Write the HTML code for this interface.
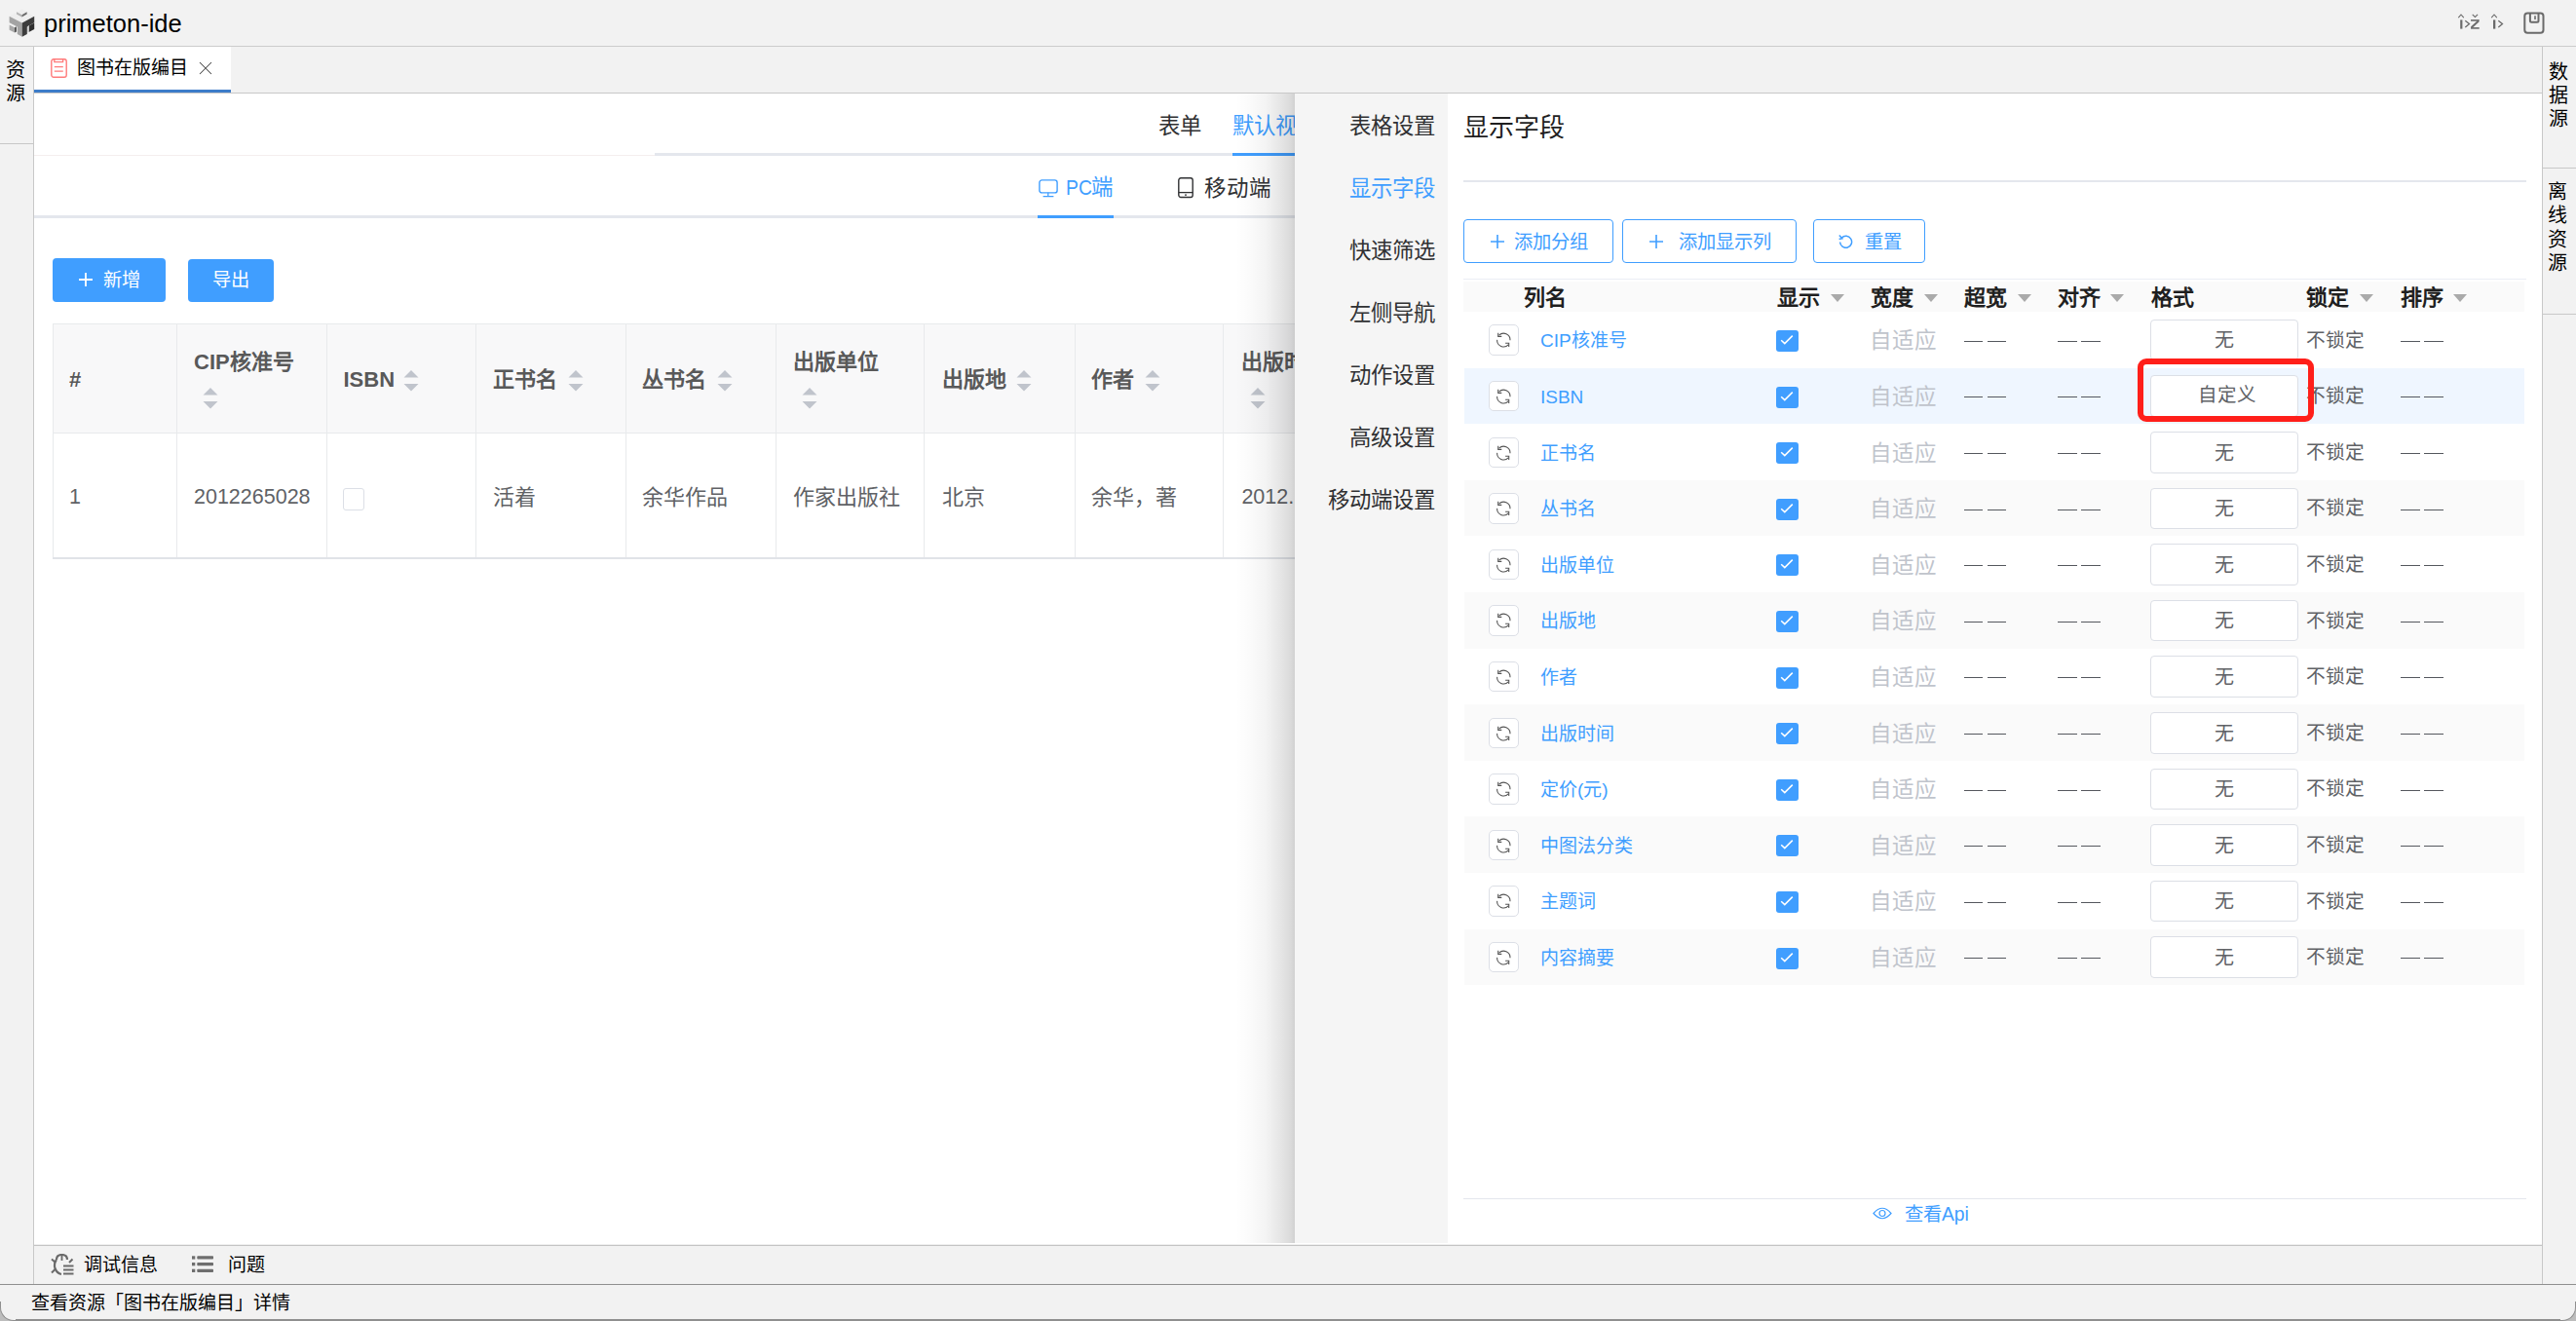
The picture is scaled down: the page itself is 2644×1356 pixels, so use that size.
<!DOCTYPE html>
<html lang="zh-CN"><head><meta charset="utf-8">
<style>
*{box-sizing:border-box;margin:0;padding:0}
html,body{width:2644px;height:1356px;overflow:hidden}
body{background:#f2f2f2;font-family:"Liberation Sans",sans-serif;position:relative;color:#000}
.a{position:absolute}
.t{position:absolute;white-space:nowrap;line-height:1}
.b{font-weight:bold}
</style></head><body>

<svg class="a" style="left:0;top:0" width="44" height="44" viewBox="0 0 44 44">
  <polygon points="9.6,16.8 22.7,9.3 35.2,16.8 22.7,23.6" fill="#eeeeee"/>
  <polygon points="17,12.2 22.5,15.3 22.5,17.6 17,14.5" fill="#b4b4b4"/>
  <polygon points="22.5,15.3 27.6,12.2 27.6,14.5 22.5,17.6" fill="#6a6a6a"/>
  <polygon points="9.6,16.8 22.7,23.6 22.7,37.8 17.8,35 17.8,27.5 9.6,23.2" fill="#a3a3a3"/>
  <polygon points="9.6,25.4 15,28.2 15,33.6 9.6,30.8" fill="#a8a8a8"/>
  <polygon points="15,28.2 17,27.2 17,32.4 15,33.6" fill="#5a5a5a"/>
  <polygon points="22.7,23.6 35.2,16.8 35.2,23.2 27.8,27.4 27.8,35 22.7,37.8" fill="#3c3c3c"/>
  <polygon points="30,26.2 35.2,23.4 35.2,30 30,32.8" fill="#2e2e2e"/>
  <polygon points="28.4,27.1 30,26.2 30,32.8 28.4,33.6" fill="#bdbdbd"/>
</svg>
<div class="t" style="left:45px;top:11.5px;font-size:25.5px;color:#000;">primeton-ide</div>
<svg class="a" style="left:2520px;top:12px" width="52" height="20" viewBox="0 0 52 20"><g fill="none" stroke="#6a6a6a">
 <path d="M3.3,6.2 L6,3 L8.8,6.2" stroke-width="1.1"/><rect x="5.2" y="8.4" width="2.2" height="9.2" fill="#6a6a6a" stroke="none"/>
 <path d="M10.3,9.2 L14.5,12.6 L10.3,16" stroke-width="1.3"/>
 <path d="M17.7,2.9 L20.4,5.5 L23.1,2.9" stroke-width="1.1"/>
 <rect x="16" y="8.1" width="8.7" height="1.6" fill="#6a6a6a" stroke="none"/><rect x="16" y="16.1" width="8.7" height="1.6" fill="#6a6a6a" stroke="none"/>
 <path d="M24,9.6 L16.6,16.3" stroke-width="2"/>
 <path d="M37.2,6.2 L40,3 L42.8,6.2" stroke-width="1.1"/><rect x="39" y="8.4" width="2.3" height="9.2" fill="#6a6a6a" stroke="none"/>
 <path d="M44.3,9.2 L48.5,12.6 L44.3,16" stroke-width="1.3"/>
</g></svg>
<svg class="a" style="left:2588px;top:11px" width="26" height="26" viewBox="0 0 26 26"><g fill="none" stroke="#6a6a6a">
 <rect x="3.3" y="2.6" width="19.2" height="20.2" rx="3" stroke-width="2"/>
 <path d="M8.9,2.6 V10.3 Q8.9,11.8 10.4,11.8 H16 Q17.5,11.8 17.5,10.3 V2.6" stroke-width="2"/>
 <path d="M14,5.2 V9" stroke-width="1.6"/>
</g></svg>
<div class="a" style="left:0px;top:47px;width:2644px;height:1px;background:#cccccc"></div>
<div class="a" style="left:34px;top:48px;width:1px;height:1270px;background:#c8c8c8"></div>
<div class="a" style="left:0px;top:147px;width:34px;height:1px;background:#c8c8c8"></div>
<div class="t" style="left:6px;top:60px;font-size:20px;color:#000;line-height:24.3px;width:20px;white-space:normal">资源</div>
<div class="a" style="left:2609px;top:48px;width:1px;height:1270px;background:#c8c8c8"></div>
<div class="a" style="left:2610px;top:172px;width:34px;height:1px;background:#c8c8c8"></div>
<div class="a" style="left:2610px;top:322px;width:34px;height:1px;background:#c8c8c8"></div>
<div class="t" style="left:2615.5px;top:61.5px;font-size:20px;color:#000;line-height:24.3px;width:20px;white-space:normal">数据源</div>
<div class="t" style="left:2614.8px;top:184.7px;font-size:20px;color:#000;line-height:24.4px;width:20px;white-space:normal">离线资源</div>
<div class="a" style="left:35px;top:48px;width:202px;height:47px;background:#fff"></div>
<div class="a" style="left:35px;top:92px;width:202px;height:3px;background:#3d7cc9"></div>
<div class="a" style="left:35px;top:95px;width:2574px;height:1px;background:#c8c8c8"></div>
<svg class="a" style="left:52px;top:60px" width="17" height="20" viewBox="0 0 17 20">
  <rect x="0.8" y="0.8" width="15.4" height="18.4" rx="2.2" fill="none" stroke="#ff7b7b" stroke-width="1.4"/>
  <path d="M3.8,0.8 V3.7 H12.6 V0.8" fill="none" stroke="#ff7b7b" stroke-width="1.3"/>
  <path d="M3.8,8.6 H12.8 M3.8,13.2 H12.8" stroke="#ff7b7b" stroke-width="1.3"/>
</svg>
<svg class="a" style="left:204px;top:63px" width="14" height="14" viewBox="0 0 14 14">
  <path d="M1,1 L13,13 M13,1 L1,13" stroke="#444" stroke-width="1.05"/>
</svg>
<div class="t" style="left:79px;top:60px;font-size:19px;color:#000;">图书在版编目</div>
<div class="a" style="left:35px;top:96px;width:2574px;height:1180.5px;background:#fff"></div>
<div class="t" style="left:1188.8px;top:118.8px;font-size:22.4px;color:#303133;">表单</div>
<div class="t" style="left:1265px;top:118.8px;font-size:22.4px;color:#409eff;">默认视图</div>
<div class="a" style="left:35px;top:159px;width:637px;height:1px;background:#f4eeee"></div>
<div class="a" style="left:672px;top:157px;width:700px;height:3px;background:#e4e7ed"></div>
<div class="a" style="left:1265px;top:157px;width:120px;height:3px;background:#409eff"></div>
<svg class="a" style="left:1065.5px;top:184px" width="20" height="19" viewBox="0 0 20 19">
 <rect x="0.9" y="0.9" width="18.2" height="13" rx="2.5" fill="none" stroke="#409eff" stroke-width="1.4"/>
 <path d="M9.8,13.8 V17.4 M4.6,17.6 H15.4" stroke="#409eff" stroke-width="1.3"/>
</svg>
<div class="t" style="left:1094px;top:182.3px;font-size:22.5px;color:#409eff;"><span style="display:inline-block;transform:scaleX(0.86);transform-origin:0 0;width:26.3px">PC</span>端</div>
<svg class="a" style="left:1209.3px;top:181.6px" width="17" height="22" viewBox="0 0 17 22">
 <rect x="0.8" y="0.8" width="14.4" height="19.7" rx="2.2" fill="none" stroke="#303133" stroke-width="1.4"/>
 <path d="M0.8,15.6 H15.2" stroke="#303133" stroke-width="1.3"/>
 <circle cx="8" cy="18.1" r="0.95" fill="#303133"/>
</svg>
<div class="t" style="left:1235.5px;top:183px;font-size:22.5px;color:#303133;">移动端</div>
<div class="a" style="left:35px;top:221px;width:1300px;height:3px;background:#e4e7ed"></div>
<div class="a" style="left:1065px;top:221px;width:78px;height:3px;background:#409eff"></div>
<div class="a" style="left:54px;top:265px;width:116px;height:44.5px;background:#409eff;border-radius:4px"></div>
<svg class="a" style="left:80px;top:279px" width="16" height="16" viewBox="0 0 16 16"><path d="M8,1 V15 M1,8 H15" stroke="#fff" stroke-width="1.8"/></svg>
<div class="t" style="left:106px;top:277.5px;font-size:19.3px;color:#fff;">新增</div>
<div class="a" style="left:193px;top:266px;width:88px;height:43.5px;background:#409eff;border-radius:4px"></div>
<div class="t" style="left:218px;top:277.5px;font-size:19.3px;color:#fff;">导出</div>
<div class="a" style="left:54px;top:332px;width:1300px;height:112px;background:#f8f8f9"></div>
<div class="a" style="left:54px;top:332px;width:1300px;height:1px;background:#e8eaec"></div>
<div class="a" style="left:54px;top:444px;width:1300px;height:1px;background:#e8eaec"></div>
<div class="a" style="left:54px;top:572px;width:1300px;height:1.5px;background:#e0e3e8"></div>
<div class="a" style="left:54px;top:332px;width:1px;height:240px;background:#e8eaec"></div>
<div class="a" style="left:181px;top:332px;width:1px;height:240px;background:#e8eaec"></div>
<div class="a" style="left:335px;top:332px;width:1px;height:240px;background:#e8eaec"></div>
<div class="a" style="left:488px;top:332px;width:1px;height:240px;background:#e8eaec"></div>
<div class="a" style="left:642px;top:332px;width:1px;height:240px;background:#e8eaec"></div>
<div class="a" style="left:796px;top:332px;width:1px;height:240px;background:#e8eaec"></div>
<div class="a" style="left:948px;top:332px;width:1px;height:240px;background:#e8eaec"></div>
<div class="a" style="left:1103px;top:332px;width:1px;height:240px;background:#e8eaec"></div>
<div class="a" style="left:1255px;top:332px;width:1px;height:240px;background:#e8eaec"></div>
<div class="a" style="left:1409px;top:332px;width:1px;height:240px;background:#e8eaec"></div>
<div class="t" style="left:71px;top:379px;font-size:22px;color:#595959;font-weight:bold">#</div>
<div class="t" style="left:199px;top:361px;font-size:22px;color:#595959;font-weight:bold">CIP核准号</div>
<div class="t" style="left:352.5px;top:379px;font-size:22px;color:#595959;font-weight:bold">ISBN</div>
<div class="t" style="left:506px;top:379px;font-size:22px;color:#595959;font-weight:bold">正书名</div>
<div class="t" style="left:659px;top:379px;font-size:22px;color:#595959;font-weight:bold">丛书名</div>
<div class="t" style="left:813.8px;top:361px;font-size:22px;color:#595959;font-weight:bold">出版单位</div>
<div class="t" style="left:967.4px;top:379px;font-size:22px;color:#595959;font-weight:bold">出版地</div>
<div class="t" style="left:1120px;top:379px;font-size:22px;color:#595959;font-weight:bold">作者</div>
<div class="t" style="left:1274.4px;top:361px;font-size:22px;color:#595959;font-weight:bold">出版时间</div>
<svg class="a" style="left:208px;top:398px" width="16" height="22" viewBox="0 0 16 22"><path d="M8,0 L15.5,7.6 H0.5 Z M0.5,14 H15.5 L8,21.6 Z" fill="#c0c4cc"/></svg>
<svg class="a" style="left:414px;top:380px" width="16" height="22" viewBox="0 0 16 22"><path d="M8,0 L15.5,7.6 H0.5 Z M0.5,14 H15.5 L8,21.6 Z" fill="#c0c4cc"/></svg>
<svg class="a" style="left:583px;top:380px" width="16" height="22" viewBox="0 0 16 22"><path d="M8,0 L15.5,7.6 H0.5 Z M0.5,14 H15.5 L8,21.6 Z" fill="#c0c4cc"/></svg>
<svg class="a" style="left:736.4px;top:380px" width="16" height="22" viewBox="0 0 16 22"><path d="M8,0 L15.5,7.6 H0.5 Z M0.5,14 H15.5 L8,21.6 Z" fill="#c0c4cc"/></svg>
<svg class="a" style="left:823.3px;top:398px" width="16" height="22" viewBox="0 0 16 22"><path d="M8,0 L15.5,7.6 H0.5 Z M0.5,14 H15.5 L8,21.6 Z" fill="#c0c4cc"/></svg>
<svg class="a" style="left:1043px;top:380px" width="16" height="22" viewBox="0 0 16 22"><path d="M8,0 L15.5,7.6 H0.5 Z M0.5,14 H15.5 L8,21.6 Z" fill="#c0c4cc"/></svg>
<svg class="a" style="left:1174.6px;top:380px" width="16" height="22" viewBox="0 0 16 22"><path d="M8,0 L15.5,7.6 H0.5 Z M0.5,14 H15.5 L8,21.6 Z" fill="#c0c4cc"/></svg>
<svg class="a" style="left:1283px;top:398px" width="16" height="22" viewBox="0 0 16 22"><path d="M8,0 L15.5,7.6 H0.5 Z M0.5,14 H15.5 L8,21.6 Z" fill="#c0c4cc"/></svg>
<div class="t" style="left:71px;top:500px;font-size:21.5px;color:#606266;">1</div>
<div class="t" style="left:199px;top:500px;font-size:21.5px;color:#606266;">2012265028</div>
<div class="a" style="left:351.5px;top:501px;width:22px;height:23px;border:1px solid #dcdfe6;border-radius:3px;background:#fff"></div>
<div class="t" style="left:506px;top:500px;font-size:22px;color:#606266;">活着</div>
<div class="t" style="left:659px;top:500px;font-size:22px;color:#606266;">余华作品</div>
<div class="t" style="left:813.8px;top:500px;font-size:22px;color:#606266;">作家出版社</div>
<div class="t" style="left:967.4px;top:500px;font-size:22px;color:#606266;">北京</div>
<div class="t" style="left:1120px;top:500px;font-size:22px;color:#606266;">余华，著</div>
<div class="t" style="left:1274.4px;top:500px;font-size:21.5px;color:#606266;">2012.12</div>
<div class="a" style="left:1268px;top:96px;width:61px;height:1180px;background:linear-gradient(to right,rgba(0,0,0,0),rgba(0,0,0,0.02) 28%,rgba(0,0,0,0.047) 52%,rgba(0,0,0,0.10) 77%,rgba(0,0,0,0.145) 93%,rgba(0,0,0,0.18))"></div>
<div class="a" style="left:1329px;top:96px;width:157px;height:1180px;background:#f5f5f5"></div>
<div class="a" style="left:1486px;top:96px;width:1123px;height:1180px;background:#fff"></div>
<div class="t" style="right:1171px;top:118.8px;font-size:22.4px;color:#303133">表格设置</div>
<div class="t" style="right:1171px;top:182.8px;font-size:22.4px;color:#409eff">显示字段</div>
<div class="t" style="right:1171px;top:246.8px;font-size:22.4px;color:#303133">快速筛选</div>
<div class="t" style="right:1171px;top:310.8px;font-size:22.4px;color:#303133">左侧导航</div>
<div class="t" style="right:1171px;top:374.8px;font-size:22.4px;color:#303133">动作设置</div>
<div class="t" style="right:1171px;top:438.8px;font-size:22.4px;color:#303133">高级设置</div>
<div class="t" style="right:1171px;top:502.8px;font-size:22.4px;color:#303133">移动端设置</div>
<div class="t" style="left:1502px;top:118px;font-size:26px;color:#1f1f1f;">显示字段</div>
<div class="a" style="left:1502px;top:185px;width:1091px;height:2px;background:#e4e7ed"></div>
<div class="a" style="left:1502px;top:225px;width:154px;height:44.5px;border:1px solid #409eff;border-radius:4px;background:#fff"></div>
<div class="a" style="left:1665px;top:225px;width:178.5px;height:44.5px;border:1px solid #409eff;border-radius:4px;background:#fff"></div>
<div class="a" style="left:1861px;top:225px;width:114.5px;height:44.5px;border:1px solid #409eff;border-radius:4px;background:#fff"></div>
<svg class="a" style="left:1528.5px;top:240px" width="16" height="16" viewBox="0 0 16 16"><path d="M8,1 V15 M1,8 H15" stroke="#409eff" stroke-width="1.6"/></svg>
<div class="t" style="left:1554px;top:238.5px;font-size:19.3px;color:#409eff;">添加分组</div>
<svg class="a" style="left:1692px;top:240px" width="16" height="16" viewBox="0 0 16 16"><path d="M8,1 V15 M1,8 H15" stroke="#409eff" stroke-width="1.6"/></svg>
<div class="t" style="left:1723px;top:238.5px;font-size:19.3px;color:#409eff;">添加显示列</div>
<svg class="a" style="left:1887px;top:240px" width="15" height="15" viewBox="0 0 15 15"><path d="M3.2,4.2 A6,6 0 1 1 1.6,8.5" fill="none" stroke="#409eff" stroke-width="1.5"/><path d="M0.8,1.6 L3.8,4.8 L0.6,5.6" fill="none" stroke="#409eff" stroke-width="1.5"/></svg>
<div class="t" style="left:1913.5px;top:238.5px;font-size:19.3px;color:#409eff;">重置</div>
<div class="a" style="left:1502px;top:286px;width:1091px;height:1px;background:#ebeef5"></div>
<div class="a" style="left:1502px;top:288.5px;width:1089px;height:31.5px;background:#fafafa"></div>
<div class="t" style="left:1564px;top:295px;font-size:22px;color:#1f1f1f;font-weight:bold">列名</div>
<div class="t" style="left:1824px;top:295px;font-size:22px;color:#1f1f1f;font-weight:bold">显示</div>
<svg class="a" style="left:1879px;top:302px" width="14" height="9" viewBox="0 0 14 9"><path d="M0,0 H14 L7,8 Z" fill="#aaaaaa"/></svg>
<div class="t" style="left:1920px;top:295px;font-size:22px;color:#1f1f1f;font-weight:bold">宽度</div>
<svg class="a" style="left:1975px;top:302px" width="14" height="9" viewBox="0 0 14 9"><path d="M0,0 H14 L7,8 Z" fill="#aaaaaa"/></svg>
<div class="t" style="left:2015.5px;top:295px;font-size:22px;color:#1f1f1f;font-weight:bold">超宽</div>
<svg class="a" style="left:2071px;top:302px" width="14" height="9" viewBox="0 0 14 9"><path d="M0,0 H14 L7,8 Z" fill="#aaaaaa"/></svg>
<div class="t" style="left:2112px;top:295px;font-size:22px;color:#1f1f1f;font-weight:bold">对齐</div>
<svg class="a" style="left:2166px;top:302px" width="14" height="9" viewBox="0 0 14 9"><path d="M0,0 H14 L7,8 Z" fill="#aaaaaa"/></svg>
<div class="t" style="left:2208px;top:295px;font-size:22px;color:#1f1f1f;font-weight:bold">格式</div>
<div class="t" style="left:2367px;top:295px;font-size:22px;color:#1f1f1f;font-weight:bold">锁定</div>
<svg class="a" style="left:2422px;top:302px" width="14" height="9" viewBox="0 0 14 9"><path d="M0,0 H14 L7,8 Z" fill="#aaaaaa"/></svg>
<div class="t" style="left:2464px;top:295px;font-size:22px;color:#1f1f1f;font-weight:bold">排序</div>
<svg class="a" style="left:2518px;top:302px" width="14" height="9" viewBox="0 0 14 9"><path d="M0,0 H14 L7,8 Z" fill="#aaaaaa"/></svg>
<div class="a" style="left:1528px;top:333.3px;width:30.5px;height:31.5px;border:1px solid #dcdfe6;border-radius:5px;background:#fff"></div>
<svg class="a" style="left:1528px;top:333.3px" width="31" height="32" viewBox="0 0 31 32"><g fill="none" stroke="#555" stroke-width="1.1"><path d="M10.6,11.2 A6.7,6.7 0 0 1 22,16.2"/><path d="M9.7,8.7 V12.4 H13.3"/><path d="M8.6,15.9 A6.7,6.7 0 0 0 20.2,20.8"/><path d="M17.1,19.3 H20.7 V22.9"/></g></svg>
<div class="t" style="left:1581px;top:340.3px;font-size:19px;color:#409eff;">CIP核准号</div>
<div class="a" style="left:1823px;top:339.0px;width:23px;height:22px;background:#409eff;border-radius:3px"></div>
<svg class="a" style="left:1823px;top:339.0px" width="23" height="22" viewBox="0 0 23 22"><path d="M5.2,10.2 L8.8,13.6 L16.8,5.6" fill="none" stroke="#fff" stroke-width="1.5"/></svg>
<div class="t" style="left:1918.5px;top:339.3px;font-size:22.5px;color:#c0c4cc;">自适应</div>
<div class="a" style="left:2015.5px;top:350px;width:19.7px;height:1.3px;background:#55585e"></div>
<div class="a" style="left:2039.5px;top:350px;width:19.9px;height:1.3px;background:#55585e"></div>
<div class="a" style="left:2112px;top:350px;width:19.7px;height:1.3px;background:#55585e"></div>
<div class="a" style="left:2136px;top:350px;width:19.9px;height:1.3px;background:#55585e"></div>
<div class="a" style="left:2464px;top:350px;width:19.7px;height:1.3px;background:#55585e"></div>
<div class="a" style="left:2488px;top:350px;width:19.9px;height:1.3px;background:#55585e"></div>
<div class="a" style="left:2207px;top:327.8px;width:152px;height:42.5px;border:1px solid #dcdfe6;border-radius:4px;background:#fff"></div>
<div class="t" style="left:2273px;top:339.3px;font-size:20px;color:#606266;">无</div>
<div class="t" style="left:2367px;top:339.5px;font-size:19.7px;color:#606266;">不锁定</div>
<div class="a" style="left:1503px;top:377.6px;width:1088px;height:57.6px;background:#eff6ff"></div>
<div class="a" style="left:1528px;top:390.90000000000003px;width:30.5px;height:31.5px;border:1px solid #dcdfe6;border-radius:5px;background:#fff"></div>
<svg class="a" style="left:1528px;top:390.90000000000003px" width="31" height="32" viewBox="0 0 31 32"><g fill="none" stroke="#555" stroke-width="1.1"><path d="M10.6,11.2 A6.7,6.7 0 0 1 22,16.2"/><path d="M9.7,8.7 V12.4 H13.3"/><path d="M8.6,15.9 A6.7,6.7 0 0 0 20.2,20.8"/><path d="M17.1,19.3 H20.7 V22.9"/></g></svg>
<div class="t" style="left:1581px;top:397.90000000000003px;font-size:19px;color:#409eff;">ISBN</div>
<div class="a" style="left:1823px;top:396.6px;width:23px;height:22px;background:#409eff;border-radius:3px"></div>
<svg class="a" style="left:1823px;top:396.6px" width="23" height="22" viewBox="0 0 23 22"><path d="M5.2,10.2 L8.8,13.6 L16.8,5.6" fill="none" stroke="#fff" stroke-width="1.5"/></svg>
<div class="t" style="left:1918.5px;top:396.90000000000003px;font-size:22.5px;color:#c0c4cc;">自适应</div>
<div class="a" style="left:2015.5px;top:407px;width:19.7px;height:1.3px;background:#55585e"></div>
<div class="a" style="left:2039.5px;top:407px;width:19.9px;height:1.3px;background:#55585e"></div>
<div class="a" style="left:2112px;top:407px;width:19.7px;height:1.3px;background:#55585e"></div>
<div class="a" style="left:2136px;top:407px;width:19.9px;height:1.3px;background:#55585e"></div>
<div class="a" style="left:2464px;top:407px;width:19.7px;height:1.3px;background:#55585e"></div>
<div class="a" style="left:2488px;top:407px;width:19.9px;height:1.3px;background:#55585e"></div>
<div class="a" style="left:2207px;top:385.40000000000003px;width:152px;height:42.5px;border:1px solid #dcdfe6;border-radius:4px;background:#fff"></div>
<div class="t" style="left:2255.5px;top:396.40000000000003px;font-size:19.5px;color:#606266;">自定义</div>
<div class="t" style="left:2367px;top:397.1px;font-size:19.7px;color:#606266;">不锁定</div>
<div class="a" style="left:1528px;top:448.5px;width:30.5px;height:31.5px;border:1px solid #dcdfe6;border-radius:5px;background:#fff"></div>
<svg class="a" style="left:1528px;top:448.5px" width="31" height="32" viewBox="0 0 31 32"><g fill="none" stroke="#555" stroke-width="1.1"><path d="M10.6,11.2 A6.7,6.7 0 0 1 22,16.2"/><path d="M9.7,8.7 V12.4 H13.3"/><path d="M8.6,15.9 A6.7,6.7 0 0 0 20.2,20.8"/><path d="M17.1,19.3 H20.7 V22.9"/></g></svg>
<div class="t" style="left:1581px;top:455.5px;font-size:19px;color:#409eff;">正书名</div>
<div class="a" style="left:1823px;top:454.2px;width:23px;height:22px;background:#409eff;border-radius:3px"></div>
<svg class="a" style="left:1823px;top:454.2px" width="23" height="22" viewBox="0 0 23 22"><path d="M5.2,10.2 L8.8,13.6 L16.8,5.6" fill="none" stroke="#fff" stroke-width="1.5"/></svg>
<div class="t" style="left:1918.5px;top:454.5px;font-size:22.5px;color:#c0c4cc;">自适应</div>
<div class="a" style="left:2015.5px;top:465px;width:19.7px;height:1.3px;background:#55585e"></div>
<div class="a" style="left:2039.5px;top:465px;width:19.9px;height:1.3px;background:#55585e"></div>
<div class="a" style="left:2112px;top:465px;width:19.7px;height:1.3px;background:#55585e"></div>
<div class="a" style="left:2136px;top:465px;width:19.9px;height:1.3px;background:#55585e"></div>
<div class="a" style="left:2464px;top:465px;width:19.7px;height:1.3px;background:#55585e"></div>
<div class="a" style="left:2488px;top:465px;width:19.9px;height:1.3px;background:#55585e"></div>
<div class="a" style="left:2207px;top:443.0px;width:152px;height:42.5px;border:1px solid #dcdfe6;border-radius:4px;background:#fff"></div>
<div class="t" style="left:2273px;top:454.5px;font-size:20px;color:#606266;">无</div>
<div class="t" style="left:2367px;top:454.7px;font-size:19.7px;color:#606266;">不锁定</div>
<div class="a" style="left:1503px;top:492.8px;width:1088px;height:57.6px;background:#fafafa"></div>
<div class="a" style="left:1528px;top:506.1px;width:30.5px;height:31.5px;border:1px solid #dcdfe6;border-radius:5px;background:#fff"></div>
<svg class="a" style="left:1528px;top:506.1px" width="31" height="32" viewBox="0 0 31 32"><g fill="none" stroke="#555" stroke-width="1.1"><path d="M10.6,11.2 A6.7,6.7 0 0 1 22,16.2"/><path d="M9.7,8.7 V12.4 H13.3"/><path d="M8.6,15.9 A6.7,6.7 0 0 0 20.2,20.8"/><path d="M17.1,19.3 H20.7 V22.9"/></g></svg>
<div class="t" style="left:1581px;top:513.1px;font-size:19px;color:#409eff;">丛书名</div>
<div class="a" style="left:1823px;top:511.8px;width:23px;height:22px;background:#409eff;border-radius:3px"></div>
<svg class="a" style="left:1823px;top:511.8px" width="23" height="22" viewBox="0 0 23 22"><path d="M5.2,10.2 L8.8,13.6 L16.8,5.6" fill="none" stroke="#fff" stroke-width="1.5"/></svg>
<div class="t" style="left:1918.5px;top:512.1px;font-size:22.5px;color:#c0c4cc;">自适应</div>
<div class="a" style="left:2015.5px;top:523px;width:19.7px;height:1.3px;background:#55585e"></div>
<div class="a" style="left:2039.5px;top:523px;width:19.9px;height:1.3px;background:#55585e"></div>
<div class="a" style="left:2112px;top:523px;width:19.7px;height:1.3px;background:#55585e"></div>
<div class="a" style="left:2136px;top:523px;width:19.9px;height:1.3px;background:#55585e"></div>
<div class="a" style="left:2464px;top:523px;width:19.7px;height:1.3px;background:#55585e"></div>
<div class="a" style="left:2488px;top:523px;width:19.9px;height:1.3px;background:#55585e"></div>
<div class="a" style="left:2207px;top:500.6px;width:152px;height:42.5px;border:1px solid #dcdfe6;border-radius:4px;background:#fff"></div>
<div class="t" style="left:2273px;top:512.1px;font-size:20px;color:#606266;">无</div>
<div class="t" style="left:2367px;top:512.3000000000001px;font-size:19.7px;color:#606266;">不锁定</div>
<div class="a" style="left:1528px;top:563.6999999999999px;width:30.5px;height:31.5px;border:1px solid #dcdfe6;border-radius:5px;background:#fff"></div>
<svg class="a" style="left:1528px;top:563.6999999999999px" width="31" height="32" viewBox="0 0 31 32"><g fill="none" stroke="#555" stroke-width="1.1"><path d="M10.6,11.2 A6.7,6.7 0 0 1 22,16.2"/><path d="M9.7,8.7 V12.4 H13.3"/><path d="M8.6,15.9 A6.7,6.7 0 0 0 20.2,20.8"/><path d="M17.1,19.3 H20.7 V22.9"/></g></svg>
<div class="t" style="left:1581px;top:570.6999999999999px;font-size:19px;color:#409eff;">出版单位</div>
<div class="a" style="left:1823px;top:569.4px;width:23px;height:22px;background:#409eff;border-radius:3px"></div>
<svg class="a" style="left:1823px;top:569.4px" width="23" height="22" viewBox="0 0 23 22"><path d="M5.2,10.2 L8.8,13.6 L16.8,5.6" fill="none" stroke="#fff" stroke-width="1.5"/></svg>
<div class="t" style="left:1918.5px;top:569.6999999999999px;font-size:22.5px;color:#c0c4cc;">自适应</div>
<div class="a" style="left:2015.5px;top:580px;width:19.7px;height:1.3px;background:#55585e"></div>
<div class="a" style="left:2039.5px;top:580px;width:19.9px;height:1.3px;background:#55585e"></div>
<div class="a" style="left:2112px;top:580px;width:19.7px;height:1.3px;background:#55585e"></div>
<div class="a" style="left:2136px;top:580px;width:19.9px;height:1.3px;background:#55585e"></div>
<div class="a" style="left:2464px;top:580px;width:19.7px;height:1.3px;background:#55585e"></div>
<div class="a" style="left:2488px;top:580px;width:19.9px;height:1.3px;background:#55585e"></div>
<div class="a" style="left:2207px;top:558.1999999999999px;width:152px;height:42.5px;border:1px solid #dcdfe6;border-radius:4px;background:#fff"></div>
<div class="t" style="left:2273px;top:569.6999999999999px;font-size:20px;color:#606266;">无</div>
<div class="t" style="left:2367px;top:569.9px;font-size:19.7px;color:#606266;">不锁定</div>
<div class="a" style="left:1503px;top:608.0px;width:1088px;height:57.6px;background:#fafafa"></div>
<div class="a" style="left:1528px;top:621.3px;width:30.5px;height:31.5px;border:1px solid #dcdfe6;border-radius:5px;background:#fff"></div>
<svg class="a" style="left:1528px;top:621.3px" width="31" height="32" viewBox="0 0 31 32"><g fill="none" stroke="#555" stroke-width="1.1"><path d="M10.6,11.2 A6.7,6.7 0 0 1 22,16.2"/><path d="M9.7,8.7 V12.4 H13.3"/><path d="M8.6,15.9 A6.7,6.7 0 0 0 20.2,20.8"/><path d="M17.1,19.3 H20.7 V22.9"/></g></svg>
<div class="t" style="left:1581px;top:628.3px;font-size:19px;color:#409eff;">出版地</div>
<div class="a" style="left:1823px;top:627.0px;width:23px;height:22px;background:#409eff;border-radius:3px"></div>
<svg class="a" style="left:1823px;top:627.0px" width="23" height="22" viewBox="0 0 23 22"><path d="M5.2,10.2 L8.8,13.6 L16.8,5.6" fill="none" stroke="#fff" stroke-width="1.5"/></svg>
<div class="t" style="left:1918.5px;top:627.3px;font-size:22.5px;color:#c0c4cc;">自适应</div>
<div class="a" style="left:2015.5px;top:638px;width:19.7px;height:1.3px;background:#55585e"></div>
<div class="a" style="left:2039.5px;top:638px;width:19.9px;height:1.3px;background:#55585e"></div>
<div class="a" style="left:2112px;top:638px;width:19.7px;height:1.3px;background:#55585e"></div>
<div class="a" style="left:2136px;top:638px;width:19.9px;height:1.3px;background:#55585e"></div>
<div class="a" style="left:2464px;top:638px;width:19.7px;height:1.3px;background:#55585e"></div>
<div class="a" style="left:2488px;top:638px;width:19.9px;height:1.3px;background:#55585e"></div>
<div class="a" style="left:2207px;top:615.8px;width:152px;height:42.5px;border:1px solid #dcdfe6;border-radius:4px;background:#fff"></div>
<div class="t" style="left:2273px;top:627.3px;font-size:20px;color:#606266;">无</div>
<div class="t" style="left:2367px;top:627.5px;font-size:19.7px;color:#606266;">不锁定</div>
<div class="a" style="left:1528px;top:678.9px;width:30.5px;height:31.5px;border:1px solid #dcdfe6;border-radius:5px;background:#fff"></div>
<svg class="a" style="left:1528px;top:678.9px" width="31" height="32" viewBox="0 0 31 32"><g fill="none" stroke="#555" stroke-width="1.1"><path d="M10.6,11.2 A6.7,6.7 0 0 1 22,16.2"/><path d="M9.7,8.7 V12.4 H13.3"/><path d="M8.6,15.9 A6.7,6.7 0 0 0 20.2,20.8"/><path d="M17.1,19.3 H20.7 V22.9"/></g></svg>
<div class="t" style="left:1581px;top:685.9px;font-size:19px;color:#409eff;">作者</div>
<div class="a" style="left:1823px;top:684.6px;width:23px;height:22px;background:#409eff;border-radius:3px"></div>
<svg class="a" style="left:1823px;top:684.6px" width="23" height="22" viewBox="0 0 23 22"><path d="M5.2,10.2 L8.8,13.6 L16.8,5.6" fill="none" stroke="#fff" stroke-width="1.5"/></svg>
<div class="t" style="left:1918.5px;top:684.9px;font-size:22.5px;color:#c0c4cc;">自适应</div>
<div class="a" style="left:2015.5px;top:695px;width:19.7px;height:1.3px;background:#55585e"></div>
<div class="a" style="left:2039.5px;top:695px;width:19.9px;height:1.3px;background:#55585e"></div>
<div class="a" style="left:2112px;top:695px;width:19.7px;height:1.3px;background:#55585e"></div>
<div class="a" style="left:2136px;top:695px;width:19.9px;height:1.3px;background:#55585e"></div>
<div class="a" style="left:2464px;top:695px;width:19.7px;height:1.3px;background:#55585e"></div>
<div class="a" style="left:2488px;top:695px;width:19.9px;height:1.3px;background:#55585e"></div>
<div class="a" style="left:2207px;top:673.4px;width:152px;height:42.5px;border:1px solid #dcdfe6;border-radius:4px;background:#fff"></div>
<div class="t" style="left:2273px;top:684.9px;font-size:20px;color:#606266;">无</div>
<div class="t" style="left:2367px;top:685.1px;font-size:19.7px;color:#606266;">不锁定</div>
<div class="a" style="left:1503px;top:723.2px;width:1088px;height:57.6px;background:#fafafa"></div>
<div class="a" style="left:1528px;top:736.5px;width:30.5px;height:31.5px;border:1px solid #dcdfe6;border-radius:5px;background:#fff"></div>
<svg class="a" style="left:1528px;top:736.5px" width="31" height="32" viewBox="0 0 31 32"><g fill="none" stroke="#555" stroke-width="1.1"><path d="M10.6,11.2 A6.7,6.7 0 0 1 22,16.2"/><path d="M9.7,8.7 V12.4 H13.3"/><path d="M8.6,15.9 A6.7,6.7 0 0 0 20.2,20.8"/><path d="M17.1,19.3 H20.7 V22.9"/></g></svg>
<div class="t" style="left:1581px;top:743.5px;font-size:19px;color:#409eff;">出版时间</div>
<div class="a" style="left:1823px;top:742.2px;width:23px;height:22px;background:#409eff;border-radius:3px"></div>
<svg class="a" style="left:1823px;top:742.2px" width="23" height="22" viewBox="0 0 23 22"><path d="M5.2,10.2 L8.8,13.6 L16.8,5.6" fill="none" stroke="#fff" stroke-width="1.5"/></svg>
<div class="t" style="left:1918.5px;top:742.5px;font-size:22.5px;color:#c0c4cc;">自适应</div>
<div class="a" style="left:2015.5px;top:753px;width:19.7px;height:1.3px;background:#55585e"></div>
<div class="a" style="left:2039.5px;top:753px;width:19.9px;height:1.3px;background:#55585e"></div>
<div class="a" style="left:2112px;top:753px;width:19.7px;height:1.3px;background:#55585e"></div>
<div class="a" style="left:2136px;top:753px;width:19.9px;height:1.3px;background:#55585e"></div>
<div class="a" style="left:2464px;top:753px;width:19.7px;height:1.3px;background:#55585e"></div>
<div class="a" style="left:2488px;top:753px;width:19.9px;height:1.3px;background:#55585e"></div>
<div class="a" style="left:2207px;top:731.0px;width:152px;height:42.5px;border:1px solid #dcdfe6;border-radius:4px;background:#fff"></div>
<div class="t" style="left:2273px;top:742.5px;font-size:20px;color:#606266;">无</div>
<div class="t" style="left:2367px;top:742.7px;font-size:19.7px;color:#606266;">不锁定</div>
<div class="a" style="left:1528px;top:794.0999999999999px;width:30.5px;height:31.5px;border:1px solid #dcdfe6;border-radius:5px;background:#fff"></div>
<svg class="a" style="left:1528px;top:794.0999999999999px" width="31" height="32" viewBox="0 0 31 32"><g fill="none" stroke="#555" stroke-width="1.1"><path d="M10.6,11.2 A6.7,6.7 0 0 1 22,16.2"/><path d="M9.7,8.7 V12.4 H13.3"/><path d="M8.6,15.9 A6.7,6.7 0 0 0 20.2,20.8"/><path d="M17.1,19.3 H20.7 V22.9"/></g></svg>
<div class="t" style="left:1581px;top:801.0999999999999px;font-size:19px;color:#409eff;">定价(元)</div>
<div class="a" style="left:1823px;top:799.8px;width:23px;height:22px;background:#409eff;border-radius:3px"></div>
<svg class="a" style="left:1823px;top:799.8px" width="23" height="22" viewBox="0 0 23 22"><path d="M5.2,10.2 L8.8,13.6 L16.8,5.6" fill="none" stroke="#fff" stroke-width="1.5"/></svg>
<div class="t" style="left:1918.5px;top:800.0999999999999px;font-size:22.5px;color:#c0c4cc;">自适应</div>
<div class="a" style="left:2015.5px;top:811px;width:19.7px;height:1.3px;background:#55585e"></div>
<div class="a" style="left:2039.5px;top:811px;width:19.9px;height:1.3px;background:#55585e"></div>
<div class="a" style="left:2112px;top:811px;width:19.7px;height:1.3px;background:#55585e"></div>
<div class="a" style="left:2136px;top:811px;width:19.9px;height:1.3px;background:#55585e"></div>
<div class="a" style="left:2464px;top:811px;width:19.7px;height:1.3px;background:#55585e"></div>
<div class="a" style="left:2488px;top:811px;width:19.9px;height:1.3px;background:#55585e"></div>
<div class="a" style="left:2207px;top:788.5999999999999px;width:152px;height:42.5px;border:1px solid #dcdfe6;border-radius:4px;background:#fff"></div>
<div class="t" style="left:2273px;top:800.0999999999999px;font-size:20px;color:#606266;">无</div>
<div class="t" style="left:2367px;top:800.3px;font-size:19.7px;color:#606266;">不锁定</div>
<div class="a" style="left:1503px;top:838.4px;width:1088px;height:57.6px;background:#fafafa"></div>
<div class="a" style="left:1528px;top:851.6999999999999px;width:30.5px;height:31.5px;border:1px solid #dcdfe6;border-radius:5px;background:#fff"></div>
<svg class="a" style="left:1528px;top:851.6999999999999px" width="31" height="32" viewBox="0 0 31 32"><g fill="none" stroke="#555" stroke-width="1.1"><path d="M10.6,11.2 A6.7,6.7 0 0 1 22,16.2"/><path d="M9.7,8.7 V12.4 H13.3"/><path d="M8.6,15.9 A6.7,6.7 0 0 0 20.2,20.8"/><path d="M17.1,19.3 H20.7 V22.9"/></g></svg>
<div class="t" style="left:1581px;top:858.6999999999999px;font-size:19px;color:#409eff;">中图法分类</div>
<div class="a" style="left:1823px;top:857.4px;width:23px;height:22px;background:#409eff;border-radius:3px"></div>
<svg class="a" style="left:1823px;top:857.4px" width="23" height="22" viewBox="0 0 23 22"><path d="M5.2,10.2 L8.8,13.6 L16.8,5.6" fill="none" stroke="#fff" stroke-width="1.5"/></svg>
<div class="t" style="left:1918.5px;top:857.6999999999999px;font-size:22.5px;color:#c0c4cc;">自适应</div>
<div class="a" style="left:2015.5px;top:868px;width:19.7px;height:1.3px;background:#55585e"></div>
<div class="a" style="left:2039.5px;top:868px;width:19.9px;height:1.3px;background:#55585e"></div>
<div class="a" style="left:2112px;top:868px;width:19.7px;height:1.3px;background:#55585e"></div>
<div class="a" style="left:2136px;top:868px;width:19.9px;height:1.3px;background:#55585e"></div>
<div class="a" style="left:2464px;top:868px;width:19.7px;height:1.3px;background:#55585e"></div>
<div class="a" style="left:2488px;top:868px;width:19.9px;height:1.3px;background:#55585e"></div>
<div class="a" style="left:2207px;top:846.1999999999999px;width:152px;height:42.5px;border:1px solid #dcdfe6;border-radius:4px;background:#fff"></div>
<div class="t" style="left:2273px;top:857.6999999999999px;font-size:20px;color:#606266;">无</div>
<div class="t" style="left:2367px;top:857.9px;font-size:19.7px;color:#606266;">不锁定</div>
<div class="a" style="left:1528px;top:909.3px;width:30.5px;height:31.5px;border:1px solid #dcdfe6;border-radius:5px;background:#fff"></div>
<svg class="a" style="left:1528px;top:909.3px" width="31" height="32" viewBox="0 0 31 32"><g fill="none" stroke="#555" stroke-width="1.1"><path d="M10.6,11.2 A6.7,6.7 0 0 1 22,16.2"/><path d="M9.7,8.7 V12.4 H13.3"/><path d="M8.6,15.9 A6.7,6.7 0 0 0 20.2,20.8"/><path d="M17.1,19.3 H20.7 V22.9"/></g></svg>
<div class="t" style="left:1581px;top:916.3px;font-size:19px;color:#409eff;">主题词</div>
<div class="a" style="left:1823px;top:915.0px;width:23px;height:22px;background:#409eff;border-radius:3px"></div>
<svg class="a" style="left:1823px;top:915.0px" width="23" height="22" viewBox="0 0 23 22"><path d="M5.2,10.2 L8.8,13.6 L16.8,5.6" fill="none" stroke="#fff" stroke-width="1.5"/></svg>
<div class="t" style="left:1918.5px;top:915.3px;font-size:22.5px;color:#c0c4cc;">自适应</div>
<div class="a" style="left:2015.5px;top:926px;width:19.7px;height:1.3px;background:#55585e"></div>
<div class="a" style="left:2039.5px;top:926px;width:19.9px;height:1.3px;background:#55585e"></div>
<div class="a" style="left:2112px;top:926px;width:19.7px;height:1.3px;background:#55585e"></div>
<div class="a" style="left:2136px;top:926px;width:19.9px;height:1.3px;background:#55585e"></div>
<div class="a" style="left:2464px;top:926px;width:19.7px;height:1.3px;background:#55585e"></div>
<div class="a" style="left:2488px;top:926px;width:19.9px;height:1.3px;background:#55585e"></div>
<div class="a" style="left:2207px;top:903.8px;width:152px;height:42.5px;border:1px solid #dcdfe6;border-radius:4px;background:#fff"></div>
<div class="t" style="left:2273px;top:915.3px;font-size:20px;color:#606266;">无</div>
<div class="t" style="left:2367px;top:915.5px;font-size:19.7px;color:#606266;">不锁定</div>
<div class="a" style="left:1503px;top:953.6px;width:1088px;height:57.6px;background:#fafafa"></div>
<div class="a" style="left:1528px;top:966.9px;width:30.5px;height:31.5px;border:1px solid #dcdfe6;border-radius:5px;background:#fff"></div>
<svg class="a" style="left:1528px;top:966.9px" width="31" height="32" viewBox="0 0 31 32"><g fill="none" stroke="#555" stroke-width="1.1"><path d="M10.6,11.2 A6.7,6.7 0 0 1 22,16.2"/><path d="M9.7,8.7 V12.4 H13.3"/><path d="M8.6,15.9 A6.7,6.7 0 0 0 20.2,20.8"/><path d="M17.1,19.3 H20.7 V22.9"/></g></svg>
<div class="t" style="left:1581px;top:973.9px;font-size:19px;color:#409eff;">内容摘要</div>
<div class="a" style="left:1823px;top:972.6px;width:23px;height:22px;background:#409eff;border-radius:3px"></div>
<svg class="a" style="left:1823px;top:972.6px" width="23" height="22" viewBox="0 0 23 22"><path d="M5.2,10.2 L8.8,13.6 L16.8,5.6" fill="none" stroke="#fff" stroke-width="1.5"/></svg>
<div class="t" style="left:1918.5px;top:972.9px;font-size:22.5px;color:#c0c4cc;">自适应</div>
<div class="a" style="left:2015.5px;top:983px;width:19.7px;height:1.3px;background:#55585e"></div>
<div class="a" style="left:2039.5px;top:983px;width:19.9px;height:1.3px;background:#55585e"></div>
<div class="a" style="left:2112px;top:983px;width:19.7px;height:1.3px;background:#55585e"></div>
<div class="a" style="left:2136px;top:983px;width:19.9px;height:1.3px;background:#55585e"></div>
<div class="a" style="left:2464px;top:983px;width:19.7px;height:1.3px;background:#55585e"></div>
<div class="a" style="left:2488px;top:983px;width:19.9px;height:1.3px;background:#55585e"></div>
<div class="a" style="left:2207px;top:961.4px;width:152px;height:42.5px;border:1px solid #dcdfe6;border-radius:4px;background:#fff"></div>
<div class="t" style="left:2273px;top:972.9px;font-size:20px;color:#606266;">无</div>
<div class="t" style="left:2367px;top:973.1px;font-size:19.7px;color:#606266;">不锁定</div>
<div class="a" style="left:2193.5px;top:368px;width:181px;height:65px;border:6px solid #ff1f1a;border-radius:9px"></div>
<div class="a" style="left:1502px;top:1230px;width:1091px;height:1px;background:#e4e7ed"></div>
<svg class="a" style="left:1922px;top:1238px" width="20" height="15" viewBox="0 0 20 15"><path d="M1,7.5 Q10,-3 19,7.5 Q10,18 1,7.5 Z" fill="none" stroke="#409eff" stroke-width="1.2"/><circle cx="10" cy="7.5" r="3" fill="none" stroke="#409eff" stroke-width="1.2"/></svg>
<div class="t" style="left:1955px;top:1236.5px;font-size:19.3px;color:#409eff;">查看Api</div>
<div class="a" style="left:35px;top:1276.5px;width:2574px;height:2px;background:#efefef"></div>
<div class="a" style="left:35px;top:1278px;width:2574px;height:1px;background:#c4c4c4"></div>
<div class="a" style="left:0px;top:1318px;width:2644px;height:1px;background:#8f8f8f"></div>
<div class="a" style="left:0px;top:1354px;width:2644px;height:2px;background:#8f8f8f"></div>
<div class="a" style="left:0px;top:1338px;width:16px;height:18px;background:#bdbdbd"></div>
<div class="a" style="left:0px;top:1336px;width:16px;height:19.5px;background:#f2f2f2;border-bottom:1.5px solid #8f8f8f;border-left:1px solid #8f8f8f;border-bottom-left-radius:14px"></div>
<div class="a" style="left:2628px;top:1338px;width:16px;height:18px;background:#bdbdbd"></div>
<div class="a" style="left:2628px;top:1336px;width:16px;height:19.5px;background:#f2f2f2;border-bottom:1.5px solid #8f8f8f;border-right:1px solid #8f8f8f;border-bottom-right-radius:14px"></div>
<svg class="a" style="left:52px;top:1287px" width="25" height="23" viewBox="0 0 25 23">
 <path d="M6,6 Q6,1 11.5,1 Q17,1 17,6" fill="none" stroke="#6a6a6a" stroke-width="2.2"/>
 <path d="M11.5,2 V7" stroke="#6a6a6a" stroke-width="1.8"/>
 <path d="M6,6 Q3,10 4.5,15 Q6.5,20 11,21" fill="none" stroke="#6a6a6a" stroke-width="2.2"/>
 <path d="M1,5.5 L5,9 M1,19.5 L5,15.5 M22.5,5.5 L19,9" stroke="#6a6a6a" stroke-width="2"/>
 <path d="M13,12.5 H23.5 M13,16.5 H23.5 M13,20.5 H23.5" stroke="#6a6a6a" stroke-width="2.2"/>
</svg>
<div class="t" style="left:85.5px;top:1289px;font-size:19px;color:#000;">调试信息</div>
<svg class="a" style="left:197px;top:1289px" width="22" height="18" viewBox="0 0 22 18">
 <rect x="0" y="0.3" width="3.3" height="3.3" fill="#6e6e6e"/><rect x="5.3" y="0.3" width="16.7" height="3.3" rx="0.8" fill="#6e6e6e"/>
 <rect x="0" y="7" width="3.3" height="3.3" fill="#6e6e6e"/><rect x="5.3" y="7" width="16.7" height="3.3" rx="0.8" fill="#6e6e6e"/>
 <rect x="0" y="13.7" width="3.3" height="3.3" fill="#6e6e6e"/><rect x="5.3" y="13.7" width="16.7" height="3.3" rx="0.8" fill="#6e6e6e"/>
</svg>
<div class="t" style="left:233.5px;top:1289px;font-size:19px;color:#000;">问题</div>
<div class="t" style="left:32px;top:1328px;font-size:19px;color:#000;">查看资源「图书在版编目」详情</div>
</body></html>
